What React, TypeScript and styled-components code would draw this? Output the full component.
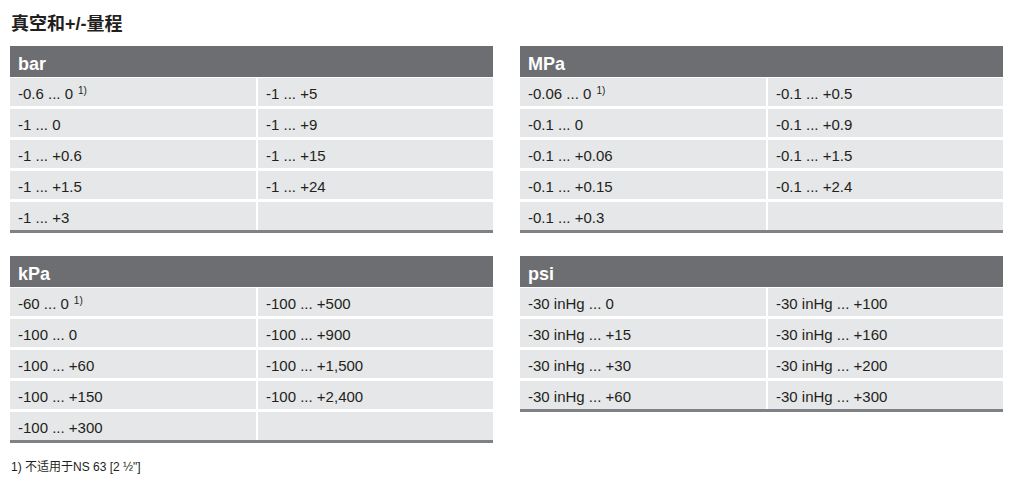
import React from "react";
import styled, { createGlobalStyle } from "styled-components";

const Global = createGlobalStyle`
  html, body { margin: 0; padding: 0; background: #ffffff; }
  body { font-family: "Liberation Sans", Arial, "Noto Sans CJK SC", sans-serif; color: #231f20; }
`;

const Page = styled.div`
  width: 1020px;
  height: 486px;
  box-sizing: border-box;
  padding: 12px 0 0 10px;
`;

const Title = styled.h1`
  margin: 0 0 0 1px;
  font-family: "Liberation Sans", Arial, "Noto Sans CJK SC", sans-serif;
  font-size: 18px;
  line-height: 24px;
  font-weight: 700;
  color: #231f20;
`;

const Grid = styled.div`
  display: grid;
  grid-template-columns: 483px 483px;
  column-gap: 27px;
  row-gap: 23px;
  align-items: start;
  margin-top: 10px;
`;

const Table = styled.section`
  display: flex;
  flex-direction: column;
`;

const Header = styled.div`
  height: 31px;
  background: #6d6e71;
  color: #ffffff;
  font-weight: 700;
  font-size: 18px;
  line-height: 36px;
  padding-left: 8px;
  overflow: hidden;
`;

const Body = styled.div`
  display: grid;
  grid-template-columns: 246px 1fr;
  column-gap: 2px;
  row-gap: 3px;
  padding-top: 1px;
  border-bottom: 3px solid #808184;
`;

const Cell = styled.div`
  height: 28px;
  box-sizing: border-box;
  padding: 2px 0 0 8px;
  background: #e6e7e8;
  font-size: 15px;
  line-height: 28px;
  white-space: nowrap;
  overflow: hidden;
  color: #231f20;
`;

const Sup = styled.sup`
  font-size: 10px;
  vertical-align: 5px;
  line-height: 0;
  margin-left: 5px;
`;

const Footnote = styled.p`
  margin: 17px 0 0 1px;
  font-size: 12px;
  line-height: 14px;
  color: #231f20;
`;

type Data = { unit: string; cells: string[] };

const tables: Data[] = [
  {
    unit: "bar",
    cells: ["-0.6 ... 0*", "-1 ... +5", "-1 ... 0", "-1 ... +9", "-1 ... +0.6", "-1 ... +15", "-1 ... +1.5", "-1 ... +24", "-1 ... +3", ""],
  },
  {
    unit: "MPa",
    cells: ["-0.06 ... 0*", "-0.1 ... +0.5", "-0.1 ... 0", "-0.1 ... +0.9", "-0.1 ... +0.06", "-0.1 ... +1.5", "-0.1 ... +0.15", "-0.1 ... +2.4", "-0.1 ... +0.3", ""],
  },
  {
    unit: "kPa",
    cells: ["-60 ... 0*", "-100 ... +500", "-100 ... 0", "-100 ... +900", "-100 ... +60", "-100 ... +1,500", "-100 ... +150", "-100 ... +2,400", "-100 ... +300", ""],
  },
  {
    unit: "psi",
    cells: ["-30 inHg ... 0", "-30 inHg ... +100", "-30 inHg ... +15", "-30 inHg ... +160", "-30 inHg ... +30", "-30 inHg ... +200", "-30 inHg ... +60", "-30 inHg ... +300"],
  },
];

function RangeTable({ unit, cells }: Data) {
  return (
    <Table>
      <Header>{unit}</Header>
      <Body>
        {cells.map((c, i) => {
          const note = c.endsWith("*");
          const text = note ? c.slice(0, -1) : c;
          return (
            <Cell key={i}>
              {text}
              {note && <Sup>1)</Sup>}
            </Cell>
          );
        })}
      </Body>
    </Table>
  );
}

export default function App() {
  return (
    <>
      <Global />
      <Page>
        <Title>真空和+/-量程</Title>
        <Grid>
          {tables.map((t) => (
            <RangeTable key={t.unit} {...t} />
          ))}
        </Grid>
        <Footnote>1) 不适用于NS 63 [2 ½"]</Footnote>
      </Page>
    </>
  );
}
